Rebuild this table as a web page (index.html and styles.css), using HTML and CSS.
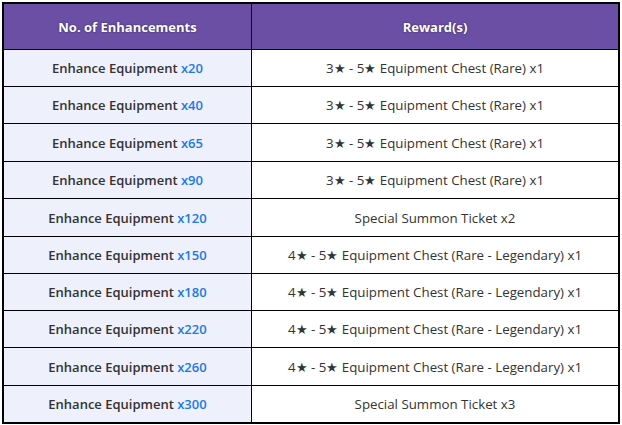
FILE: index.html
```html
<!DOCTYPE html>
<html>
<head>
<meta charset="utf-8">
<link rel="stylesheet" href="styles.css">
</head>
<body>
<table class="rewards">
  <thead>
    <tr><th class="col-a">No. of Enhancements</th><th class="col-b">Reward(s)</th></tr>
  </thead>
  <tbody>
    <tr><td class="cond">Enhance Equipment <span class="num">x20</span></td><td class="reward">3★ - 5★ Equipment Chest (Rare) x1</td></tr>
    <tr><td class="cond">Enhance Equipment <span class="num">x40</span></td><td class="reward">3★ - 5★ Equipment Chest (Rare) x1</td></tr>
    <tr class="tall"><td class="cond">Enhance Equipment <span class="num">x65</span></td><td class="reward">3★ - 5★ Equipment Chest (Rare) x1</td></tr>
    <tr><td class="cond">Enhance Equipment <span class="num">x90</span></td><td class="reward">3★ - 5★ Equipment Chest (Rare) x1</td></tr>
    <tr class="tall"><td class="cond">Enhance Equipment <span class="num">x120</span></td><td class="reward">Special Summon Ticket x2</td></tr>
    <tr><td class="cond">Enhance Equipment <span class="num">x150</span></td><td class="reward">4★ - 5★ Equipment Chest (Rare - Legendary) x1</td></tr>
    <tr><td class="cond">Enhance Equipment <span class="num">x180</span></td><td class="reward">4★ - 5★ Equipment Chest (Rare - Legendary) x1</td></tr>
    <tr><td class="cond">Enhance Equipment <span class="num">x220</span></td><td class="reward">4★ - 5★ Equipment Chest (Rare - Legendary) x1</td></tr>
    <tr class="tall"><td class="cond">Enhance Equipment <span class="num">x260</span></td><td class="reward">4★ - 5★ Equipment Chest (Rare - Legendary) x1</td></tr>
    <tr><td class="cond">Enhance Equipment <span class="num">x300</span></td><td class="reward">Special Summon Ticket x3</td></tr>
  </tbody>
</table>
</body>
</html>
```
FILE: styles.css
```css
html, body {
  margin: 0;
  padding: 0;
  background: #ffffff;
}
body {
  padding: 2px;
  font-family: "Open Sans", "Noto Sans", sans-serif;
  font-size: 13px;
  color: #333333;
}
.rewards {
  border-collapse: collapse;
  width: 618px;
  border: 2px solid #000;
  table-layout: fixed;
}
.rewards th,
.rewards td {
  border: 1px solid #000;
  text-align: center;
  padding: 0;
}
.rewards th {
  background: #6a4fa4;
  color: #ffffff;
  font-weight: 700;
  height: 45px;
  text-shadow: 0 0 2px rgba(0,0,0,0.55);
}
.col-a { width: 247px; }
.rewards td {
  height: 36px;
}
.rewards tr.tall td {
  height: 37px;
}
.cond {
  background: #eef0fb;
  font-weight: 600;
}
.num {
  color: #1a7ae8;
}
.reward {
  background: #ffffff;
  font-weight: 400;
  font-size: 13.3px;
}
```
